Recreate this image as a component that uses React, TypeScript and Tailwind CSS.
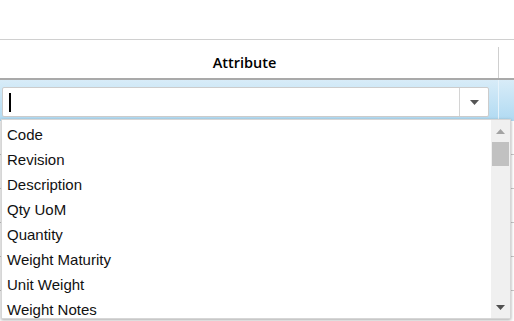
const options = [
  'Code',
  'Revision',
  'Description',
  'Qty UoM',
  'Quantity',
  'Weight Maturity',
  'Unit Weight',
  'Weight Notes',
];

const App = () => {
  return (
    <div className="w-[514px] h-[321px] overflow-hidden bg-white relative font-['Liberation_Sans',Arial,sans-serif]">
      <div className="h-[40px] border-b border-[#d0d0d0]" />
      <div className="flex h-[40px] border-b-2 border-[#a9a9a9]">
        <div className="w-[498px] flex items-center justify-center pt-[8px] pr-[9px] text-[14.5px] font-semibold text-black font-['Open_Sans',sans-serif]">
          Attribute
        </div>
        <div className="w-px mt-[7px] bg-[#cfcfcf]" />
      </div>
      <div className="flex h-[41px] bg-gradient-to-b from-[#d8ecf8] to-[#b0daf2]">
        <div className="w-[498px] pt-[7px] pl-[2px]">
          <div className="flex h-[30px] w-[487px] bg-white border border-[#cccccc] rounded-[2px]">
            <div className="flex-1 flex items-center pl-[6px]">
              <div className="w-[2px] h-[19px] bg-black" />
            </div>
            <div className="w-[29px] border-l border-[#d4d4d4] flex items-center justify-center">
              <svg width="9" height="5" viewBox="0 0 9 5">
                <path d="M0 0 L9 0 L4.5 5 Z" fill="#555" />
              </svg>
            </div>
          </div>
        </div>
        <div className="w-px bg-[#e6f3fb]" />
      </div>
      {[0, 1, 2, 3, 4, 5].map((i) => (
        <div key={i} className="h-[34px] border-b border-[#c8c8c8]" />
      ))}

      <div className="absolute left-[1px] top-[119px] w-[510px] h-[200px] bg-white border border-[#d6d6d6] shadow-[0_1px_3px_rgba(0,0,0,0.35)] flex">
        <ul className="flex-1 pt-[3px]">
          {options.map((o) => (
            <li key={o} className="h-[25px] pl-[5px] flex items-center text-[15px] text-[#111]">
              {o}
            </li>
          ))}
        </ul>
        <div className="w-[19px] bg-[#f0f0f0] flex flex-col items-center">
          <div className="h-[19px] flex items-center justify-center pt-[4px]">
            <svg width="9" height="5" viewBox="0 0 9 5">
              <path d="M0 5 L9 5 L4.5 0 Z" fill="#a3a3a3" />
            </svg>
          </div>
          <div className="mt-[3px] w-[17px] h-[24px] bg-[#c1c1c1]" />
          <div className="flex-1" />
          <div className="h-[19px] flex items-center justify-center pb-[3px]">
            <svg width="9" height="5" viewBox="0 0 9 5">
              <path d="M0 0 L9 0 L4.5 5 Z" fill="#505050" />
            </svg>
          </div>
        </div>
      </div>
    </div>
  );
};

export default App;
